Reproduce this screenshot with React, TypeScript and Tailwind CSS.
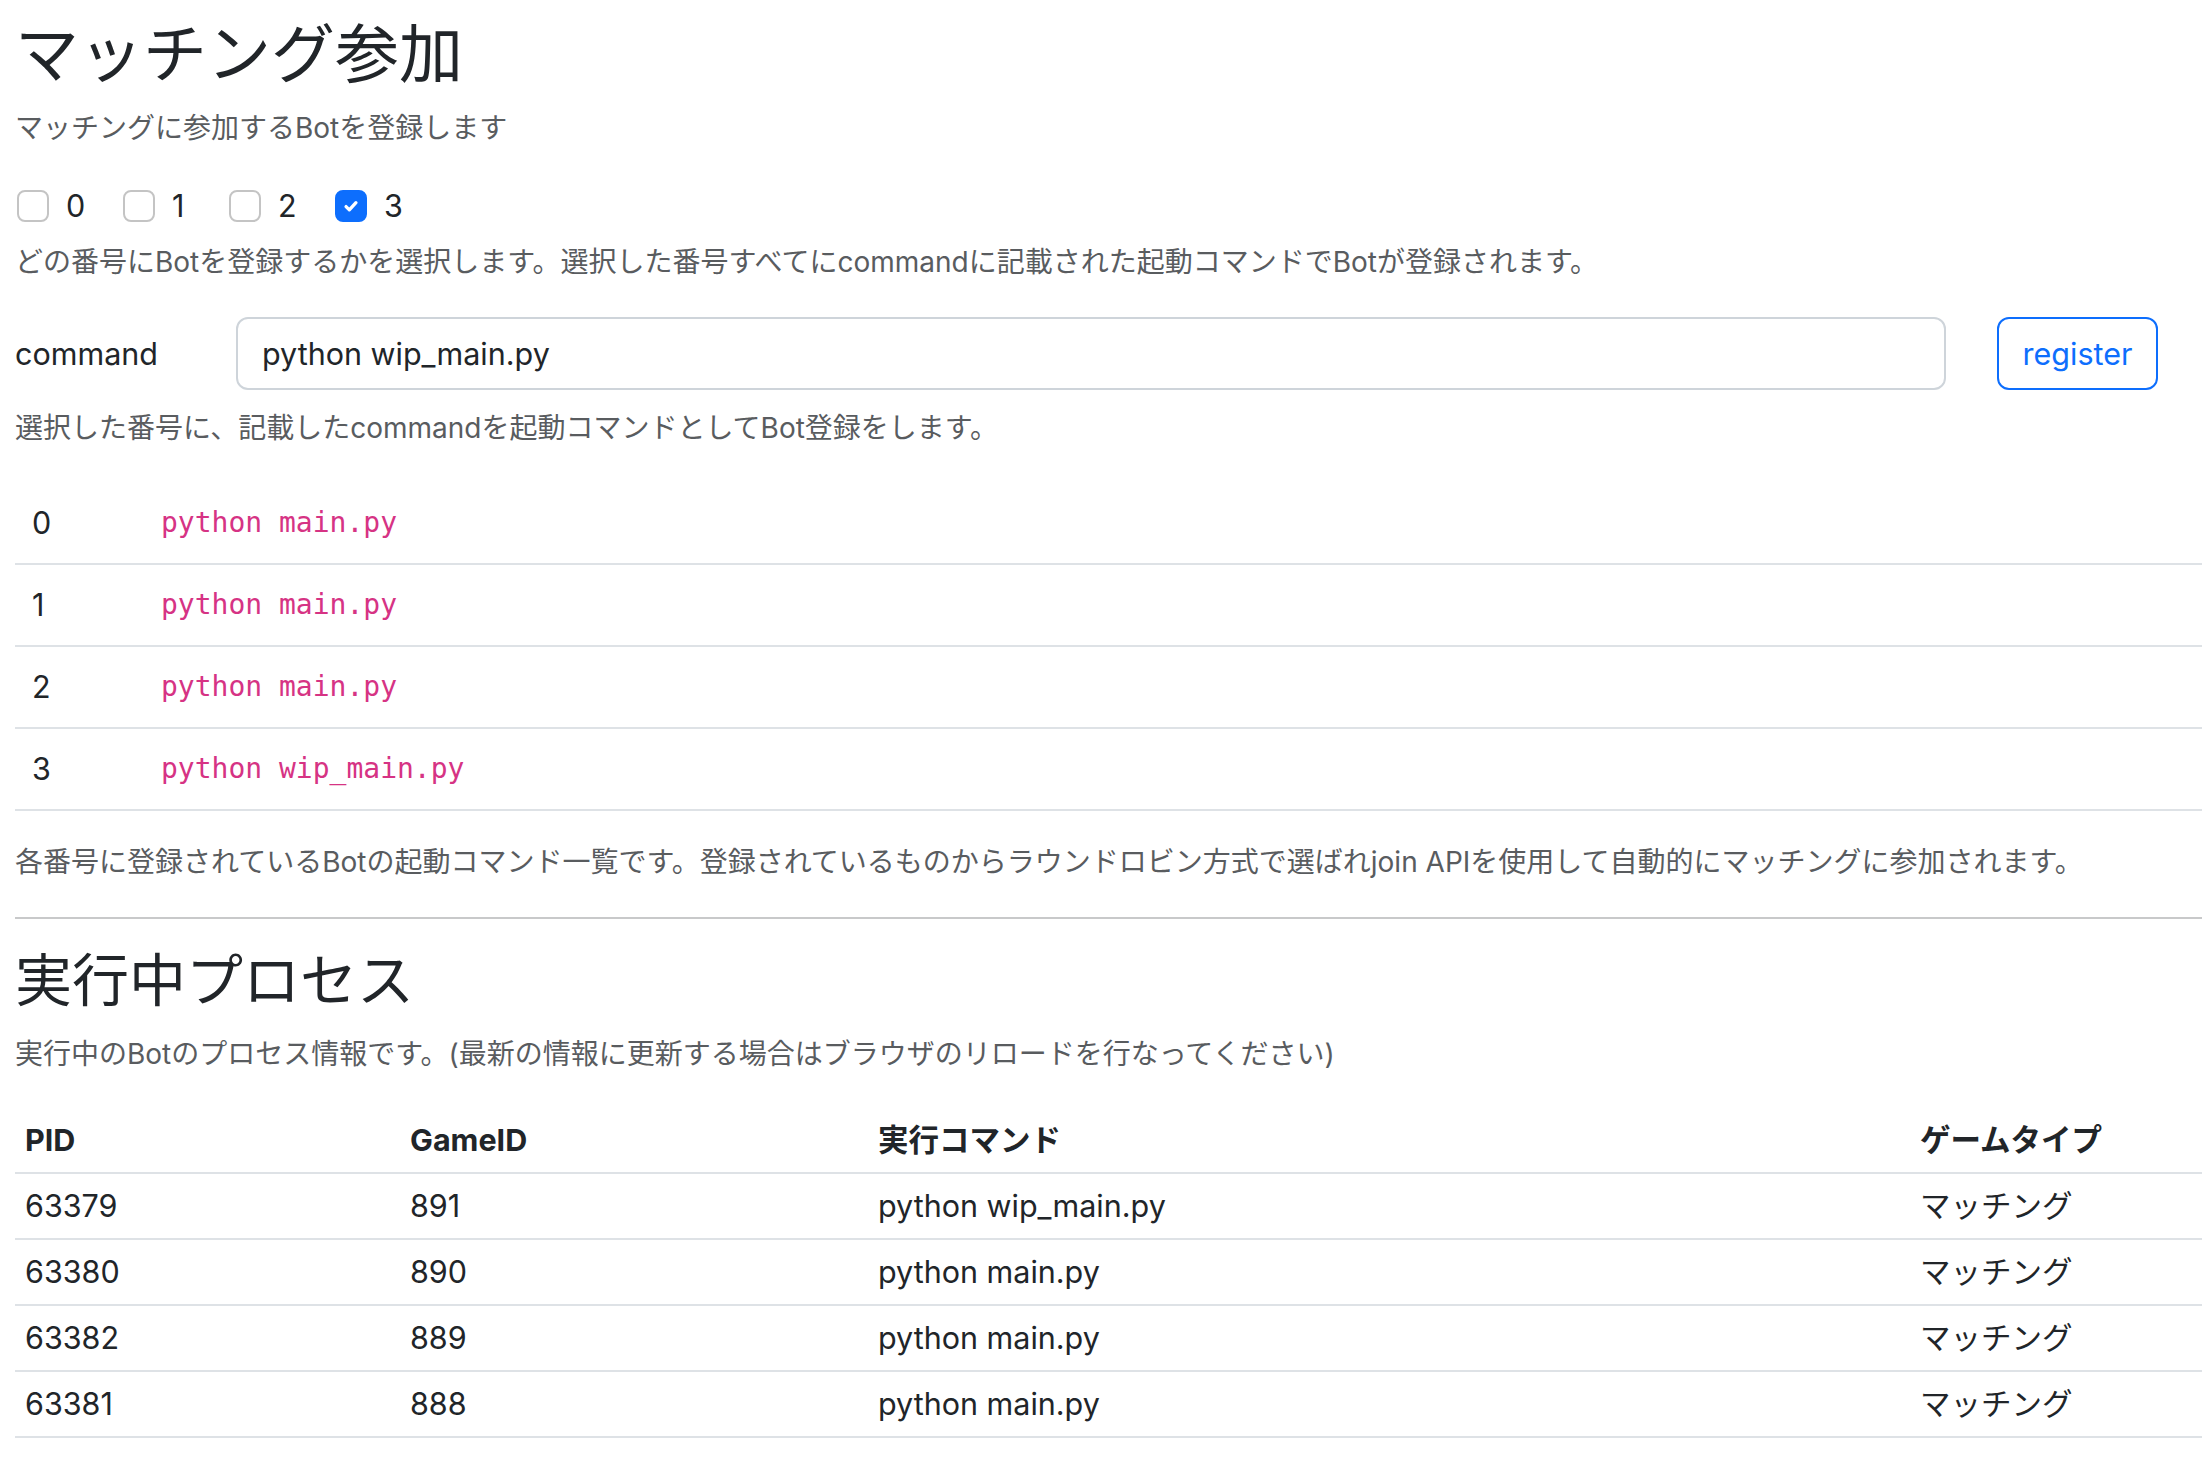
import { useState } from 'react'

const bots = [
  { no: 0, command: 'python main.py' },
  { no: 1, command: 'python main.py' },
  { no: 2, command: 'python main.py' },
  { no: 3, command: 'python wip_main.py' },
]

const processes = [
  { pid: 63379, gameId: 891, command: 'python wip_main.py', type: 'マッチング' },
  { pid: 63380, gameId: 890, command: 'python main.py', type: 'マッチング' },
  { pid: 63382, gameId: 889, command: 'python main.py', type: 'マッチング' },
  { pid: 63381, gameId: 888, command: 'python main.py', type: 'マッチング' },
]

function CheckBox({ checked, onClick }: { checked: boolean; onClick: () => void }) {
  return (
    <span
      onClick={onClick}
      className={
        'flex h-[32px] w-[32px] items-center justify-center rounded-[8px] border-2 ' +
        (checked ? 'border-[#0d6efd] bg-[#0d6efd]' : 'border-[#c4c4c4] bg-white')
      }
    >
      {checked && (
        <svg width="22" height="22" viewBox="0 0 20 20" fill="none">
          <path d="m5.5 10.5 3 3 6-6.5" stroke="#fff" strokeWidth="3" strokeLinecap="round" strokeLinejoin="round" />
        </svg>
      )}
    </span>
  )
}

export default function App(): JSX.Element {
  const [selected, setSelected] = useState<number[]>([3])
  const [command, setCommand] = useState('python wip_main.py')

  const toggle = (n: number) => {
    setSelected(selected.includes(n) ? selected.filter((s) => s !== n) : [...selected, n])
  }

  return (
    <div className="min-h-screen bg-white pl-[15px] pt-[15px] text-[#212529] font-['Inter','Noto_Sans_CJK_JP',sans-serif]">
      <h1 className="text-[64px] font-normal leading-[77px]">マッチング参加</h1>
      <p className="mt-[15px] text-[28px] leading-[42px] text-[#595c5f]">マッチングに参加するBotを登録します</p>

      <div className="mt-[34px] flex h-[45px] items-center pl-[2px]">
        {[0, 1, 2, 3].map((n) => (
          <label key={n} className="flex w-[106px] items-center gap-[17px] text-[30.5px]">
            <CheckBox checked={selected.includes(n)} onClick={() => toggle(n)} />
            <span>{n}</span>
          </label>
        ))}
      </div>
      <p className="mt-[14px] text-[28px] leading-[40px] text-[#595c5f]">
        どの番号にBotを登録するかを選択します。選択した番号すべてにcommandに記載された起動コマンドでBotが登録されます。
      </p>

      <div className="mt-[35px] flex h-[73px] items-center pr-[44px]">
        <span className="w-[221px] text-[30.5px]">command</span>
        <input
          className="h-full flex-1 rounded-[12px] border-2 border-[#ced4da] px-[24px] text-[30.5px] text-[#212529] outline-none"
          value={command}
          onChange={(e) => setCommand(e.target.value)}
        />
        <button className="ml-[51px] h-full w-[161px] rounded-[12px] border-2 border-[#0d6efd] text-[30.5px] text-[#0d6efd]">
          register
        </button>
      </div>
      <p className="mt-[18px] text-[28px] leading-[40px] text-[#595c5f]">
        選択した番号に、記載したcommandを起動コマンドとしてBot登録をします。
      </p>

      <div className="mt-[35px]">
        {bots.map((bot) => (
          <div key={bot.no} className="flex h-[82px] items-center border-b-2 border-[#dee2e6]">
            <span className="w-[146px] pl-[17px] text-[30.5px]">{bot.no}</span>
            <code className="font-['DejaVu_Sans_Mono',monospace] text-[28px] text-[#d63384]">{bot.command}</code>
          </div>
        ))}
      </div>
      <p className="mt-[31px] text-[28px] leading-[40px] text-[#595c5f]">
        各番号に登録されているBotの起動コマンド一覧です。登録されているものからラウンドロビン方式で選ばれjoin APIを使用して自動的にマッチングに参加されます。
      </p>

      <hr className="mt-[35px] border-t-2 border-[#c8c9ca]" />

      <h2 className="mt-[28px] text-[57px] font-normal leading-[68px]">実行中プロセス</h2>
      <p className="mt-[18px] text-[28px] leading-[42px] text-[#595c5f]">
        実行中のBotのプロセス情報です。(最新の情報に更新する場合はブラウザのリロードを行なってください)
      </p>

      <div className="mt-[32px] text-[30.5px]">
        <div className="grid h-[67px] grid-cols-[385px_468px_1042px_1fr] items-center border-b-2 border-[#dee2e6] font-bold">
          <span className="pl-[10px]">PID</span>
          <span className="pl-[10px]">GameID</span>
          <span className="pl-[10px]">実行コマンド</span>
          <span className="pl-[10px]">ゲームタイプ</span>
        </div>
        {processes.map((p) => (
          <div key={p.pid} className="grid h-[66px] grid-cols-[385px_468px_1042px_1fr] items-center border-b-2 border-[#dee2e6]">
            <span className="pl-[10px]">{p.pid}</span>
            <span className="pl-[10px]">{p.gameId}</span>
            <span className="pl-[10px]">{p.command}</span>
            <span className="pl-[10px]">{p.type}</span>
          </div>
        ))}
      </div>
    </div>
  )
}
